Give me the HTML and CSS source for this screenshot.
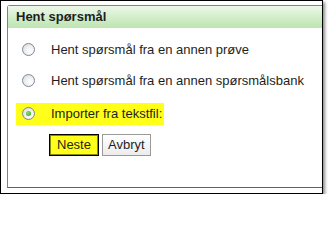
FILE: index.html
```html
<!DOCTYPE html>
<html>
<head>
<meta charset="utf-8">
<link rel="stylesheet" href="styles.css">
</head>
<body>
<div class="frame">
  <div class="panel">
    <div class="panel-head">Hent spørsmål</div>
    <div class="panel-body">
      <div class="row"><span class="opt"><span class="radio"></span><span class="label">Hent spørsmål fra en annen prøve</span></span></div>
      <div class="row"><span class="opt"><span class="radio"></span><span class="label">Hent spørsmål fra en annen spørsmålsbank</span></span></div>
      <div class="row row-hl"><span class="opt hl"><span class="radio on"></span><span class="label">Importer fra tekstfil:</span></span></div>
      <div class="buttons">
        <span class="btn primary">Neste</span>
        <span class="btn">Avbryt</span>
      </div>
    </div>
  </div>
</div>
</body>
</html>
```

FILE: styles.css
```css
html, body {
  margin: 0;
  padding: 0;
  background: #fff;
}
body {
  font-family: "Liberation Sans", Arial, sans-serif;
  font-size: 13px;
  color: #1e1e1e;
}
.frame {
  width: 321px;
  height: 192px;
  border: 1px solid #000;
  box-shadow: 2px 2px 3px rgba(0,0,0,0.45);
  display: flex;
  flex-direction: column;
}
.panel {
  margin: 4px 0 5px 6px;
  flex: 1;
  border: 1px solid #5e9c52;
  border-right: 0;
  border-bottom-color: #3f7a36;
  border-radius: 3px 0 0 0;
  display: flex;
  flex-direction: column;
}
.panel-head {
  height: 22px;
  line-height: 22px;
  padding-left: 8px;
  font-weight: bold;
  color: #1e1e1e;
  background: linear-gradient(#eef8ea, #d3eecb 50%, #bde4b2);
}
.panel-body {
  padding-top: 6px;
}
.row {
  height: 31px;
  display: flex;
  align-items: center;
}
.row-hl {
  margin-top: 2px;
}
.opt {
  display: flex;
  align-items: center;
  height: 22px;
  padding: 0 2px 0 14px;
}
.opt.hl {
  background: #ffff1a;
  margin-left: 8px;
  padding-left: 6px;
}
.radio {
  width: 11px;
  height: 11px;
  border: 1px solid #7a8a99;
  border-radius: 50%;
  background: radial-gradient(circle at 65% 65%, #ffffff 0, #f2f2f2 40%, #d6d6d6 100%);
  margin-right: 16px;
  position: relative;
  flex: none;
}
.radio.on::after {
  content: "";
  position: absolute;
  left: 3px;
  top: 3px;
  width: 5px;
  height: 5px;
  border-radius: 50%;
  background: radial-gradient(circle at 40% 40%, #8de36a, #2a9a12);
}
.buttons {
  display: flex;
  gap: 3px;
  padding: 5px 0 0 41px;
}
.btn {
  display: inline-block;
  height: 20px;
  line-height: 20px;
  padding: 0 5px;
  border: 1px solid #9a9a9a;
  background: linear-gradient(#ffffff, #ececec);
  color: #1e1e1e;
}
.btn.primary {
  padding: 0 7px;
  background: #ffff1a;
  border: 1px solid #000;
  box-shadow: inset 0 0 0 1px #8a8a00;
}
```
